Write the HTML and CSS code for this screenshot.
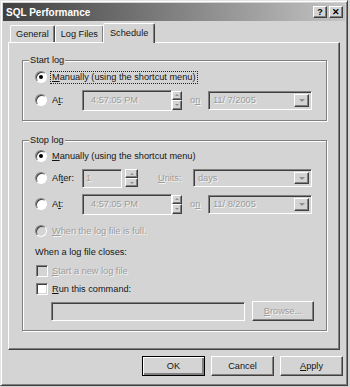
FILE: index.html
```html
<!DOCTYPE html>
<html lang="en">
<head>
    <meta charset="UTF-8">
    <title>SQL Performance</title>
    <link rel="stylesheet" href="styles.css">
</head>
<body>
    <div class="window">
        <div class="titlebar">
            <span class="title">SQL Performance</span>
            <div class="title-btns">
                <span class="tbtn">?</span>
                <span class="tbtn">&#x2715;</span>
            </div>
        </div>

        <div class="tabs">
            <div class="tab">General</div>
            <div class="tab">Log Files</div>
            <div class="tab active">Schedule</div>
        </div>

        <div class="panel">
            <fieldset class="group group-start">
                <legend>Start log</legend>
                <div class="group-body">
                    <div class="row row-22">
                        <span class="radio checked"></span>
                        <span class="label focus"><u>M</u>anually (using the shortcut menu)</span>
                    </div>
                    <div class="row row-24">
                        <div class="opt-cell">
                            <span class="radio"></span>
                            <span class="label">A<u>t</u>:</span>
                        </div>
                        <div class="field time-field disabled">4:57:05 PM</div>
                        <div class="spin"><span class="spin-up"><i class="tri-up"></i></span><span class="spin-down"><i class="tri-down"></i></span></div>
                        <span class="on-label disabled-text">o<u>n</u></span>
                        <div class="combo date-combo">
                            <span class="combo-text">11/ 7/2005</span>
                            <span class="combo-btn"><i class="tri-down"></i></span>
                        </div>
                    </div>
                </div>
            </fieldset>

            <fieldset class="group group-stop">
                <legend>Stop log</legend>
                <div class="group-body">
                    <div class="row row-20">
                        <span class="radio checked"></span>
                        <span class="label"><u>M</u>anually (using the shortcut menu)</span>
                    </div>
                    <div class="row row-24">
                        <div class="opt-cell">
                            <span class="radio"></span>
                            <span class="label">Af<u>t</u>er:</span>
                        </div>
                        <div class="field after-field disabled">1</div>
                        <div class="spin spin-sep"><span class="spin-up"><i class="tri-up"></i></span><span class="spin-down"><i class="tri-down"></i></span></div>
                        <span class="units-label disabled-text"><u>U</u>nits:</span>
                        <div class="combo units-combo">
                            <span class="combo-text">days</span>
                            <span class="combo-btn"><i class="tri-down"></i></span>
                        </div>
                    </div>
                    <div class="row row-24 mt-2">
                        <div class="opt-cell">
                            <span class="radio"></span>
                            <span class="label">A<u>t</u>:</span>
                        </div>
                        <div class="field time-field disabled">4:57:05 PM</div>
                        <div class="spin"><span class="spin-up"><i class="tri-up"></i></span><span class="spin-down"><i class="tri-down"></i></span></div>
                        <span class="on-label disabled-text">o<u>n</u></span>
                        <div class="combo date-combo">
                            <span class="combo-text">11/ 8/2005</span>
                            <span class="combo-btn"><i class="tri-down"></i></span>
                        </div>
                    </div>
                    <div class="row row-22 mt-4">
                        <span class="radio off"></span>
                        <span class="label disabled-text"><u>W</u>hen the log file is full.</span>
                    </div>
                    <div class="row row-20">
                        <span class="label-plain">When a log file closes:</span>
                    </div>
                    <div class="row row-18">
                        <span class="check off"></span>
                        <span class="label disabled-text"><u>S</u>tart a new log file</span>
                    </div>
                    <div class="row row-18">
                        <span class="check"></span>
                        <span class="label"><u>R</u>un this command:</span>
                    </div>
                    <div class="row row-20 mt-3">
                        <div class="field cmd-field disabled"></div>
                        <div class="btn browse-btn disabled-text"><u>B</u>rowse...</div>
                    </div>
                </div>
            </fieldset>
        </div>

        <div class="buttons">
            <div class="btn default">OK</div>
            <div class="btn">Cancel</div>
            <div class="btn"><u>A</u>pply</div>
        </div>
    </div>
</body>
</html>
```

FILE: styles.css
```css
body {
    margin: 0;
    background-color: #d4d4d4;
    font-family: "Liberation Sans", Arial, sans-serif;
    font-size: 9.2px;
    color: #151515;
}
u {
    text-decoration: underline;
    text-underline-offset: 1px;
}
.window {
    box-sizing: border-box;
    width: 348px;
    height: 386px;
    padding: 2px;
    background-color: #d4d4d4;
    border: 1px solid;
    border-color: #e4e4e4 #404040 #404040 #e4e4e4;
    box-shadow: inset 1px 1px #fff, inset -1px -1px #808080;
}
.titlebar {
    height: 18px;
    display: flex;
    align-items: center;
    justify-content: space-between;
    padding: 0 2px 0 3px;
    background: linear-gradient(to right, #404040, #7a7a7a 45%, #c4c4c4);
}
.title {
    color: #fff;
    font-weight: bold;
    font-size: 10px;
}
.title-btns {
    display: flex;
    gap: 2px;
}
.tbtn {
    box-sizing: border-box;
    width: 14px;
    height: 12px;
    display: flex;
    align-items: center;
    justify-content: center;
    background-color: #d4d4d4;
    border: 1px solid;
    border-color: #fff #404040 #404040 #fff;
    box-shadow: inset -1px -1px #808080;
    font-weight: bold;
    font-size: 9px;
    color: #000;
}

/* tabs */
.tabs {
    height: 21px;
    display: flex;
    align-items: flex-end;
    padding-left: 7px;
}
.tab {
    box-sizing: border-box;
    height: 17px;
    padding: 0 5px;
    display: flex;
    align-items: center;
    border: 1px solid;
    border-bottom: none;
    border-color: #fff #404040 transparent #fff;
    border-radius: 2px 2px 0 0;
    box-shadow: inset -1px 0 #808080;
    background-color: #d4d4d4;
}
.tab.active {
    height: 20px;
    margin: 0 -1px 0 -1px;
    padding: 0 6px 2px;
    position: relative;
    top: 1px;
    z-index: 1;
}
.panel {
    box-sizing: border-box;
    width: 332px;
    height: 308px;
    margin-left: 5px;
    padding: 11px 0 0 13px;
    border: 1px solid;
    border-color: #fff #404040 #404040 #fff;
    box-shadow: inset -1px -1px #808080;
}

/* group boxes */
.group {
    box-sizing: border-box;
    width: 305px;
    margin: 0;
    padding: 0;
    border: 1px solid #808080;
    box-shadow: inset 1px 1px #fff, 1px 1px #fff;
}
.group legend {
    margin-left: 6px;
    padding: 0 1px;
    line-height: 12px;
    background-color: #d4d4d4;
}
.group-body {
    padding: 0 0 8px 12px;
}
.group-stop {
    margin-top: 13px;
}
.group-stop .group-body {
    padding-bottom: 9px;
}
.row {
    display: flex;
    align-items: center;
}
.row-18 { height: 18px; }
.row-20 { height: 20px; }
.row-22 { height: 22px; }
.row-24 { height: 24px; }
.mt-2 { margin-top: 2px; }
.mt-3 { margin-top: 3px; }
.mt-4 { margin-top: 4px; }

.opt-cell {
    width: 47px;
    display: flex;
    align-items: center;
}
.label {
    margin-left: 3px;
    padding: 0 1px;
    border: 1px solid transparent;
    line-height: 11px;
}
.label.focus {
    border: 1px dotted #222;
}
.disabled-text {
    color: #9c9c9c;
    text-shadow: 1px 1px #f4f4f4;
}

/* radio and check */
.radio {
    box-sizing: border-box;
    width: 12px;
    height: 12px;
    flex: none;
    display: flex;
    align-items: center;
    justify-content: center;
    border-radius: 50%;
    border: 1px solid;
    border-color: #808080 #fff #fff #808080;
    background-color: #fff;
    box-shadow: inset 1px 1px #404040;
}
.radio.checked::after {
    content: "";
    width: 4px;
    height: 4px;
    border-radius: 50%;
    background-color: #000;
}
.radio.off {
    background-color: #d4d4d4;
}
.check {
    box-sizing: border-box;
    width: 12px;
    height: 12px;
    flex: none;
    margin-left: 1px;
    border: 1px solid;
    border-color: #808080 #fff #fff #808080;
    background-color: #fff;
    box-shadow: inset 1px 1px #404040, inset -1px -1px #d4d4d4;
}
.check.off {
    background-color: #d4d4d4;
}
.check + .label {
    margin-left: 2px;
}

/* edit fields */
.field {
    box-sizing: border-box;
    display: flex;
    align-items: center;
    border: 1px solid;
    border-color: #808080 #fff #fff #808080;
    box-shadow: inset 1px 1px #404040, inset -1px -1px #d4d4d4;
    background-color: #fff;
}
.field.disabled {
    background-color: #d4d4d4;
    color: #9c9c9c;
    text-shadow: 1px 1px #f4f4f4;
}
.time-field {
    width: 90px;
    height: 21px;
    padding-left: 8px;
}
.after-field {
    width: 40px;
    height: 19px;
    padding-left: 3px;
}
.cmd-field {
    width: 194px;
    height: 19px;
    margin-left: 16px;
}
.spin {
    width: 10px;
    height: 19px;
    display: flex;
    flex-direction: column;
}
.spin-sep {
    width: 13px;
    height: 18px;
    margin-left: 3px;
}
.spin-up, .spin-down {
    box-sizing: border-box;
    flex: 1;
    display: flex;
    align-items: center;
    justify-content: center;
    border: 1px solid;
    border-color: #fff #404040 #404040 #fff;
    box-shadow: inset -1px -1px #808080;
}
.tri-down, .tri-up {
    width: 0;
    height: 0;
    border-left: 3px solid transparent;
    border-right: 3px solid transparent;
}
.tri-down {
    border-top: 3px solid #909090;
}
.tri-up {
    border-bottom: 3px solid #909090;
}
.spin .tri-down, .spin .tri-up {
    border-left-width: 2px;
    border-right-width: 2px;
    border-top-width: 2px;
    border-bottom-width: 2px;
}
.spin .tri-up { border-top: none; }
.spin .tri-down { border-bottom: none; }

.on-label {
    width: 18px;
    margin-left: 8px;
}
.units-label {
    width: 35px;
    margin-left: 20px;
}

/* combo boxes */
.combo {
    box-sizing: border-box;
    height: 19px;
    display: flex;
    align-items: center;
    justify-content: space-between;
    padding: 2px 2px 2px 4px;
    border: 1px solid;
    border-color: #808080 #fff #fff #808080;
    box-shadow: inset 1px 1px #404040, inset -1px -1px #d4d4d4;
    color: #9c9c9c;
    text-shadow: 1px 1px #f4f4f4;
}
.date-combo {
    width: 104px;
}
.units-combo {
    width: 119px;
    height: 18px;
}
.combo-btn {
    box-sizing: border-box;
    width: 15px;
    height: 100%;
    display: flex;
    align-items: center;
    justify-content: center;
    border: 1px solid;
    border-color: #fff #404040 #404040 #fff;
    box-shadow: inset -1px -1px #808080;
}

/* push buttons */
.btn {
    box-sizing: border-box;
    width: 63px;
    height: 20px;
    display: flex;
    align-items: center;
    justify-content: center;
    border: 1px solid;
    border-color: #fff #404040 #404040 #fff;
    box-shadow: inset -1px -1px #808080;
}
.btn.default {
    border: 1px solid #000;
    box-shadow: inset 1px 1px #fff, inset -2px -2px #808080;
}
.browse-btn {
    width: 62px;
    margin-left: 7px;
}
.buttons {
    display: flex;
    justify-content: flex-end;
    gap: 6px;
    margin-top: 6px;
    padding-right: 2px;
}
```
